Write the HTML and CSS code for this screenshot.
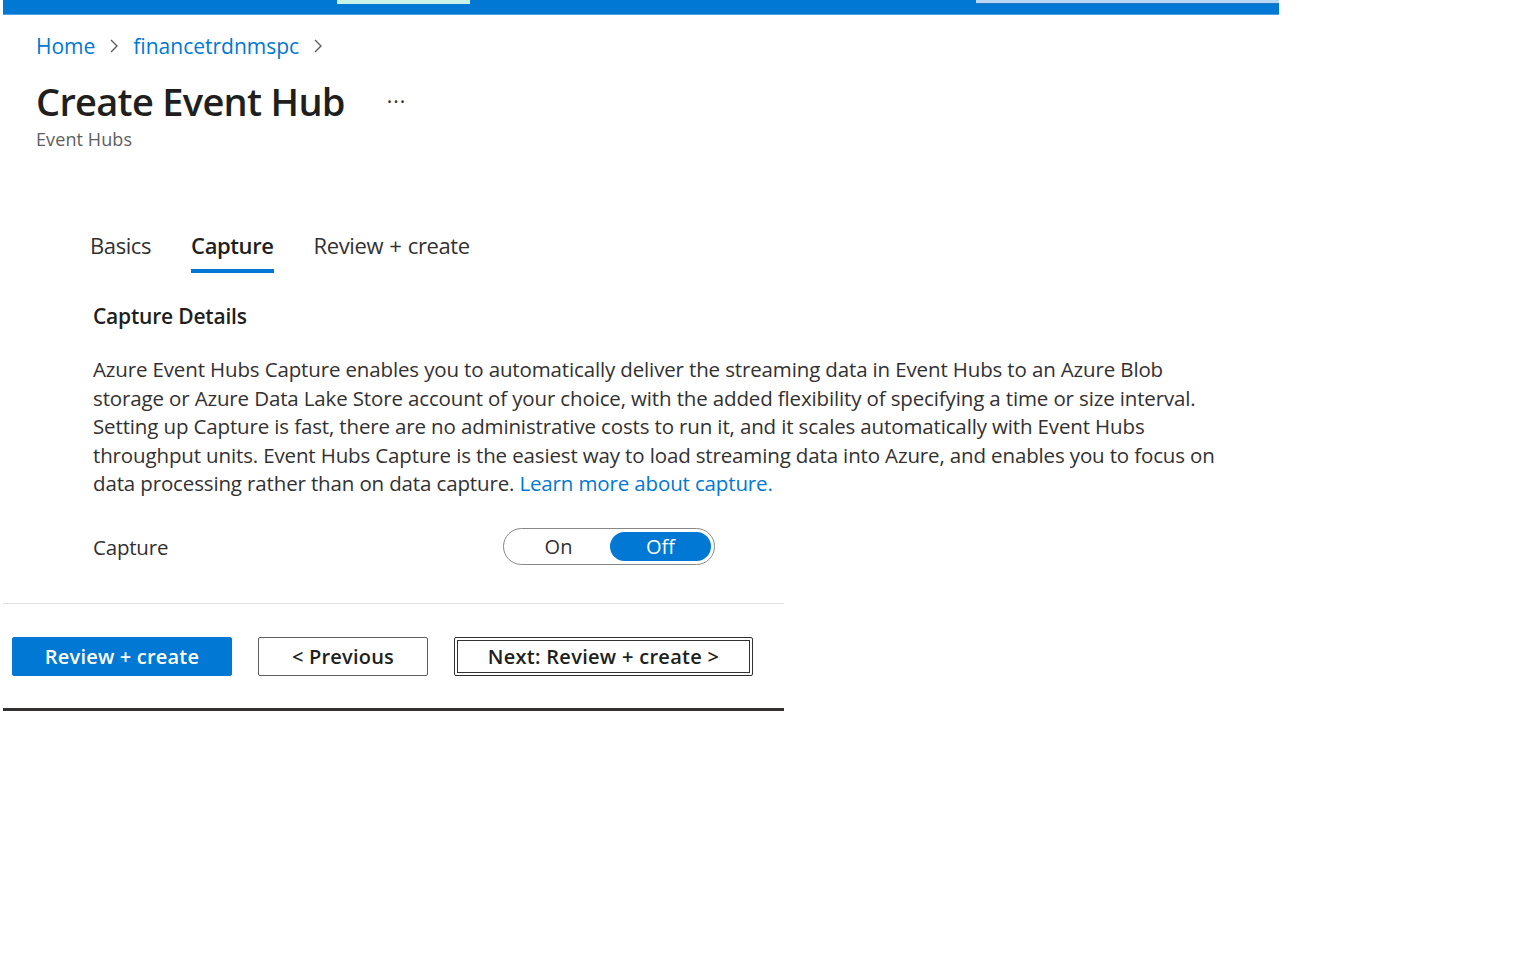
FILE: index.html
```html
<!DOCTYPE html>
<html lang="en">
<head>
<meta charset="utf-8">
<title>Create Event Hub</title>
<link rel="stylesheet" href="styles.css">
</head>
<body>
<div class="topbar">
  <span class="hl hl-mint"></span>
  <span class="hl hl-blue"></span>
</div>
<div class="page">
  <header class="head">
    <nav class="crumbs">
      <a class="crumb" href="#">Home</a>
      <svg class="chev" viewBox="0 0 12 16" width="12" height="16"><path d="M3 2 L9 8 L3 14" fill="none" stroke="#605e5c" stroke-width="1.4"/></svg>
      <a class="crumb" href="#">financetrdnmspc</a>
      <svg class="chev" viewBox="0 0 12 16" width="12" height="16"><path d="M3 2 L9 8 L3 14" fill="none" stroke="#605e5c" stroke-width="1.4"/></svg>
    </nav>
    <div class="title-row">
      <h1 class="title">Create Event Hub</h1>
      <span class="more">&middot;&middot;&middot;</span>
    </div>
    <div class="subtitle">Event Hubs</div>
  </header>

  <div class="tabs">
    <div class="tab">Basics</div>
    <div class="tab active">Capture</div>
    <div class="tab">Review + create</div>
  </div>

  <section class="content">
    <h2 class="section-title">Capture Details</h2>
    <p class="desc">Azure Event Hubs Capture enables you to automatically deliver the streaming data in Event Hubs to an Azure Blob<br>storage or Azure Data Lake Store account of your choice, with the added flexibility of specifying a time or size interval.<br>Setting up Capture is fast, there are no administrative costs to run it, and it scales automatically with Event Hubs<br>throughput units. Event Hubs Capture is the easiest way to load streaming data into Azure, and enables you to focus on<br>data processing rather than on data capture. <a class="link" href="#">Learn more about capture.</a></p>
    <div class="field">
      <label class="field-label">Capture</label>
      <div class="toggle">
        <span class="opt">On</span>
        <span class="opt selected">Off</span>
      </div>
    </div>
  </section>

  <div class="footer">
    <div class="buttons">
      <button class="btn primary">Review + create</button>
      <button class="btn prev">&lt; Previous</button>
      <button class="btn focused">Next: Review + create &gt;</button>
    </div>
  </div>
</div>
</body>
</html>
```

FILE: styles.css
```css
* { box-sizing: border-box; }
html, body { margin: 0; padding: 0; background: #fff; }
body {
  font-family: "Open Sans", "Noto Sans", "Liberation Sans", sans-serif;
  color: #323130;
  width: 1536px;
  height: 960px;
  overflow: hidden;
}
.topbar {
  position: relative;
  margin-left: 3px;
  width: 1276px;
  height: 15px;
  background: #0078d4;
  border-bottom: 1px solid #4aa0e6;
}
.hl {
  position: absolute;
  top: 0;
  height: 4px;
}
.hl-mint { left: 334px; width: 133px; background: #c8f3e6; }
.hl-blue { left: 973px; width: 303px; background: #b6d8f4; border-bottom: 1px solid #2c74b8; }

.page { display: flex; flex-direction: column; }

.head { padding-left: 36px; display: flex; flex-direction: column; }
.crumbs {
  display: flex;
  align-items: center;
  gap: 12px;
  margin-top: 16px;
  height: 30px;
}
.crumb {
  color: #0078d4;
  text-decoration: none;
  font-size: 21px;
  letter-spacing: 0;
}
.chev { margin: 0 1px; }
.title-row { display: flex; align-items: center; margin-top: 20px; height: 40px; }
.title {
  margin: 0;
  font-size: 38px;
  font-weight: 600;
  letter-spacing: -0.7px;
  color: #201f1e;
  line-height: 40px;
}
.more {
  margin-left: 42px;
  font-size: 21px;
  letter-spacing: 1px;
  color: #323130;
}
.subtitle {
  margin-top: 6px;
  font-size: 18px;
  color: #605e5c;
  letter-spacing: 0.1px;
  line-height: 24px;
}

.tabs {
  display: flex;
  gap: 40px;
  margin-top: 79px;
  padding-left: 90px;
}
.tab {
  font-size: 22px;
  letter-spacing: -0.4px;
  color: #323130;
  line-height: 30px;
  padding-bottom: 9px;
  border-bottom: 4px solid transparent;
  word-spacing: 1px;
}
.tab.active { font-weight: 600; border-bottom-color: #0078d4; color: #201f1e; }

.content { padding-left: 93px; display: flex; flex-direction: column; }
.section-title {
  margin: 29px 0 0;
  font-size: 21px;
  font-weight: 600;
  letter-spacing: -0.2px;
  line-height: 28px;
  color: #201f1e;
}
.desc {
  margin: 25px 0 0;
  font-size: 20.5px;
  letter-spacing: -0.14px;
  line-height: 28.6px;
  color: #323130;
  white-space: nowrap;
}
.link { color: #0078d4; text-decoration: none; }

.field { display: flex; align-items: center; margin-top: 30px; height: 38px; }
.field-label { width: 410px; font-size: 20.5px; letter-spacing: -0.2px; }
.toggle {
  display: flex;
  align-items: center;
  width: 212px;
  height: 37px;
  border: 1.5px solid #8a8886;
  border-radius: 19px;
  padding: 2px 3px;
}
.opt {
  flex: 1;
  height: 29px;
  display: flex;
  align-items: center;
  justify-content: center;
  font-size: 20px;
  border-radius: 15px;
  color: #323130;
}
.opt.selected { background: #0078d4; color: #fff; flex: 0 0 101px; }

.footer {
  margin-left: 3px;
  width: 781px;
  margin-top: 37px;
  border-top: 1.5px solid #e1dfdd;
  border-bottom: 3px solid #323130;
  padding: 33px 0 32px 9px;
}
.buttons { display: flex; gap: 26px; }
.btn {
  height: 39px;
  padding: 0;
  font-family: inherit;
  font-size: 20px;
  font-weight: 600;
  letter-spacing: 0.2px;
  background: #fff;
  color: #201f1e;
  border: 1px solid #605e5c;
  border-radius: 2px;
}
.btn.primary { background: #0078d4; color: #fff; border-color: #0078d4; width: 220px; }
.btn.prev { width: 170px; }
.btn.focused {
  width: 299px;
  letter-spacing: 0.3px;
  border: 1px solid #323130;
  outline: 1px solid #323130;
  outline-offset: -4px;
}
```
